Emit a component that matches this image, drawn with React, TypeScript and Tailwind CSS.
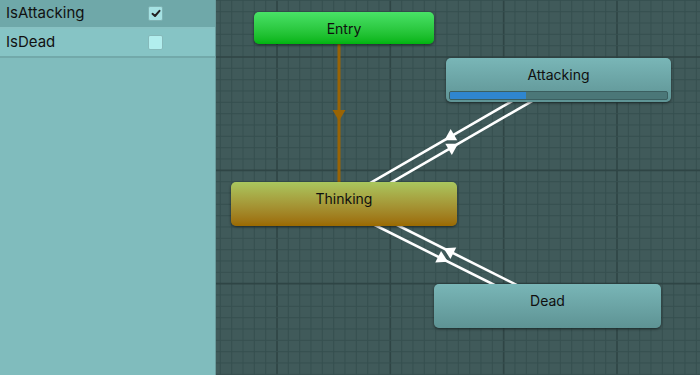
import React from "react";

type P = { x: number; y: number };

const nodes = {
  entry: { x: 38, y: 12, w: 180, h: 32 },
  attacking: { x: 230, y: 58, w: 225, h: 44 },
  thinking: { x: 15, y: 182, w: 226, h: 44 },
  dead: { x: 218, y: 284, w: 227, h: 44 },
};

const center = (n: { x: number; y: number; w: number; h: number }): P => ({
  x: n.x + n.w / 2,
  y: n.y + n.h / 2,
});

function Transition({ a, b, color, width }: { a: P; b: P; color: string; width: number }) {
  const dx = b.x - a.x;
  const dy = b.y - a.y;
  const len = Math.hypot(dx, dy);
  const d = { x: dx / len, y: dy / len };
  const n = { x: -d.y, y: d.x };
  const off = 5;
  const a2 = { x: a.x + n.x * off, y: a.y + n.y * off };
  const b2 = { x: b.x + n.x * off, y: b.y + n.y * off };
  const m = { x: (a2.x + b2.x) / 2, y: (a2.y + b2.y) / 2 };
  const tip = { x: m.x + d.x * 5, y: m.y + d.y * 5 };
  const back = { x: m.x - d.x * 6, y: m.y - d.y * 6 };
  const hw = 6.5;
  const p1 = { x: back.x + n.x * hw, y: back.y + n.y * hw };
  const p2 = { x: back.x - n.x * hw, y: back.y - n.y * hw };
  return (
    <g>
      <line x1={a2.x} y1={a2.y} x2={b2.x} y2={b2.y} stroke={color} strokeWidth={width} />
      <polygon points={`${tip.x},${tip.y} ${p1.x},${p1.y} ${p2.x},${p2.y}`} fill={color} />
    </g>
  );
}

function Grid() {
  const step = 113.33 / 10;
  const vs: React.ReactElement[] = [];
  for (let k = -6; k <= 40; k++) {
    const x = 61 + k * step;
    const major = k % 10 === 0;
    vs.push(
      <line
        key={"v" + k}
        x1={x}
        y1={0}
        x2={x}
        y2={375}
        stroke={major ? "#2f4545" : "#365050"}
        strokeWidth={major ? 1.6 : 1}
      />
    );
  }
  for (let k = -6; k <= 30; k++) {
    const y = 57 + k * step;
    const major = k % 10 === 0;
    vs.push(
      <line
        key={"h" + k}
        x1={0}
        y1={y}
        x2={484}
        y2={y}
        stroke={major ? "#2f4545" : "#365050"}
        strokeWidth={major ? 1.6 : 1}
      />
    );
  }
  return <g>{vs}</g>;
}

function Node({
  n,
  label,
  cls,
  children,
}: {
  n: { x: number; y: number; w: number; h: number };
  label: string;
  cls: string;
  children?: React.ReactNode;
}) {
  return (
    <div
      className={`absolute rounded-[5px] shadow-[0_1px_3px_rgba(0,0,0,0.55)] flex flex-col ${cls}`}
      style={{ left: n.x, top: n.y, width: n.w, height: n.h }}
    >
      <div className="pt-[7px] text-center text-[14px] leading-[20px] text-[#0f0f0f]">{label}</div>
      {children}
    </div>
  );
}

export default function App() {
  const cE = center(nodes.entry);
  const cT = center(nodes.thinking);
  const cA = center(nodes.attacking);
  const cD = center(nodes.dead);
  return (
    <div
      className="w-[700px] h-[375px] flex overflow-hidden"
      style={{ fontFamily: "Inter, 'Noto Sans', sans-serif" }}
    >
      <div className="w-[216px] shrink-0 bg-[#80bcbd] border-r border-[#6a9c9d] flex flex-col">
        <div className="h-[29px] bg-[#6fa8a9] border-b-2 border-[#88c2c3] flex items-center justify-between pl-[6px] pr-[52px]">
          <span className="text-[15px] text-[#111]">IsAttacking</span>
          <div className="w-[15px] h-[15px] rounded-[2px] bg-[#a5e2e3] border border-[#7eb2b3] flex items-center justify-center">
            <svg width="10" height="9" viewBox="0 0 10 9">
              <path d="M1.5 4.8 L4 7 L8.5 1.8" fill="none" stroke="#222" strokeWidth="2" strokeLinecap="round" strokeLinejoin="round" />
            </svg>
          </div>
        </div>
        <div className="h-[29px] bg-[#86c4c5] border-b-2 border-[#72a9aa] flex items-center justify-between pl-[6px] pr-[52px]">
          <span className="text-[15px] text-[#111]">IsDead</span>
          <div className="w-[15px] h-[15px] rounded-[2px] bg-[#b2eeee] border border-[#86b9ba]" />
        </div>
        <div className="flex-1" />
      </div>
      <div className="relative flex-1 bg-[#405a5a] overflow-hidden">
        <svg className="absolute inset-0" width="484" height="375">
          <Grid />
          <Transition a={cE} b={cT} color="#9a6404" width={3} />
          <Transition a={cT} b={cA} color="#ffffff" width={2.6} />
          <Transition a={cA} b={cT} color="#ffffff" width={2.6} />
          <Transition a={cT} b={cD} color="#ffffff" width={2.6} />
          <Transition a={cD} b={cT} color="#ffffff" width={2.6} />
        </svg>
        <Node n={nodes.entry} label="Entry" cls="bg-gradient-to-b from-[#48e266] to-[#00b40e]" />
        <Node n={nodes.attacking} label="Attacking" cls="bg-gradient-to-b from-[#79b6b7] to-[#5f9495]">
          <div className="mt-auto mx-[3px] mb-[2px] h-[9px] rounded-[2px] bg-[#4b7778] border border-[#3b5f60] overflow-hidden">
            <div className="h-full w-[35%] bg-[#2f86cf]" />
          </div>
        </Node>
        <Node n={nodes.thinking} label="Thinking" cls="bg-gradient-to-b from-[#a9c75e] to-[#9b6a00]" />
        <Node n={nodes.dead} label="Dead" cls="bg-gradient-to-b from-[#79b6b7] to-[#5e9394]" />
      </div>
    </div>
  );
}
